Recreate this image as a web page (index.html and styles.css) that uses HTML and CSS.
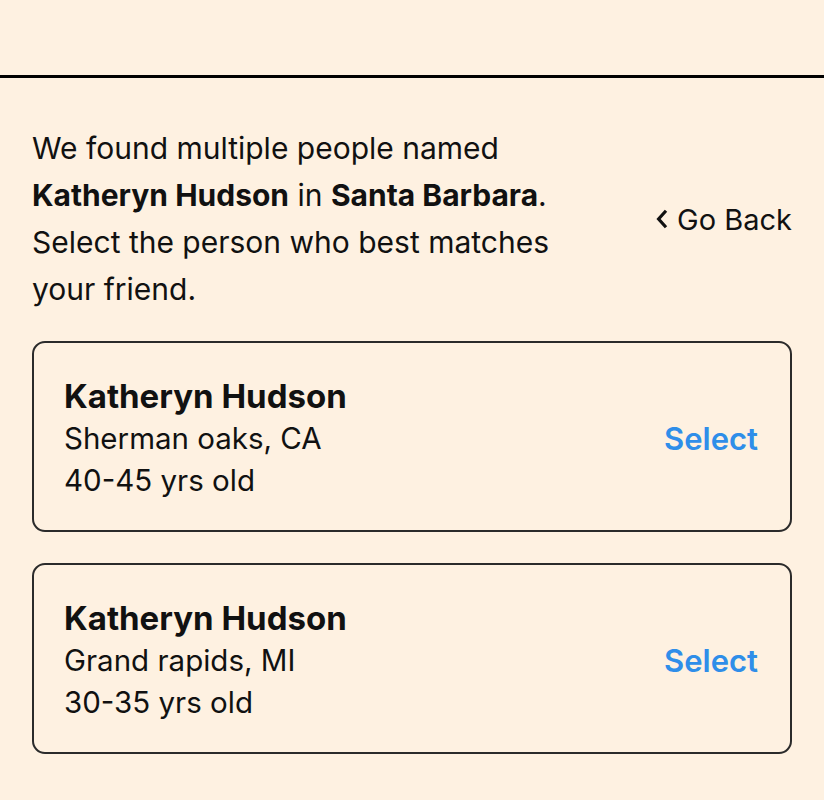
FILE: index.html
```html
<!DOCTYPE html>
<html lang="en">
  <head>
    <meta charset="UTF-8" />
    <meta name="viewport" content="width=device-width, initial-scale=1.0" />
    <title>Select Friend</title>
    <link rel="stylesheet" href="styles.css">
  </head>
  <body>
    <div class="App">
      <div class="topbar"></div>

      <div class="content">
        <div class="intro">
          <p class="message">
            We found multiple people named
            <b>Katheryn Hudson</b> in <b>Santa Barbara</b>.
            Select the person who best matches your friend.
          </p>
          <a href="#" class="back">
            <svg width="12" height="20" viewBox="0 0 12 20">
              <path d="M10 1.8 L2.6 10 L10 18.2" fill="none" stroke="#111" stroke-width="3.2" />
            </svg>
            Go Back
          </a>
        </div>

        <div class="person">
          <div class="info">
            <div class="name">Katheryn Hudson</div>
            <div class="detail">Sherman oaks, CA</div>
            <div class="detail">40-45 yrs old</div>
          </div>
          <a href="#" class="select">Select</a>
        </div>

        <div class="person">
          <div class="info">
            <div class="name">Katheryn Hudson</div>
            <div class="detail">Grand rapids, MI</div>
            <div class="detail">30-35 yrs old</div>
          </div>
          <a href="#" class="select">Select</a>
        </div>
      </div>
    </div>
  </body>
</html>
```

FILE: styles.css
```css
body {
  margin: 0;
  background-color: #fef1e1;
  font-family: Inter, "Noto Sans", sans-serif;
  color: #111;
}
.topbar {
  height: 75px;
  border-bottom: 3px solid #000;
}
.content {
  padding: 47px 32px 0;
}
.intro {
  display: flex;
  justify-content: space-between;
  align-items: center;
}
.message {
  margin: 0;
  width: 535px;
  font-size: 30px;
  line-height: 47px;
}
.message b {
  font-weight: 700;
}
.back {
  display: flex;
  align-items: center;
  gap: 9px;
  color: #111;
  text-decoration: none;
  font-size: 29px;
}
.person {
  margin-top: 28px;
  display: flex;
  justify-content: space-between;
  align-items: center;
  border: 2px solid #2b2b2b;
  border-radius: 13px;
  padding: 32px 32px 29px 30px;
}
.person + .person {
  margin-top: 31px;
}
.name {
  font-size: 33px;
  font-weight: 700;
  line-height: 42px;
}
.detail {
  font-size: 29.5px;
  line-height: 42px;
}
.select {
  color: #2f8ee9;
  text-decoration: none;
  font-size: 31px;
  font-weight: 600;
}
```
